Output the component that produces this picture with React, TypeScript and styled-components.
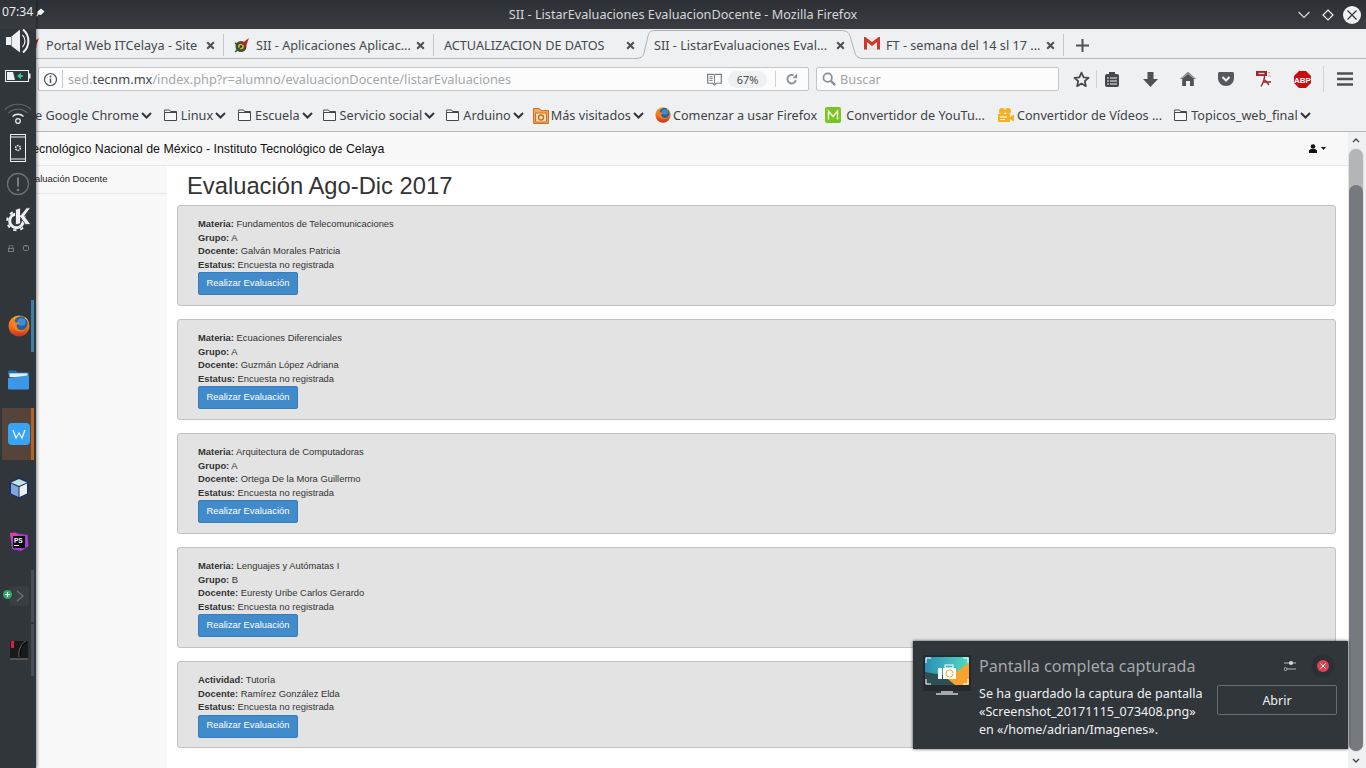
import React from "react";
import styled, { createGlobalStyle } from "styled-components";

const Global = createGlobalStyle`
  html, body { margin: 0; padding: 0; width: 1366px; height: 768px; overflow: hidden; background: #fff; }
  * { box-sizing: border-box; }
  svg { display: block; flex: none; }
`;

const Screen = styled.div`
  position: relative; width: 1366px; height: 768px; overflow: hidden;
  display: flex; flex-direction: column;
  font-family: "Noto Sans", sans-serif; color: #4d4d4d;
`;

/* ---------- window title ---------- */
const TitleBar = styled.header`
  height: 29px; flex: none; position: relative;
  display: flex; align-items: center; justify-content: flex-end; gap: 8px; padding-right: 5px;
  background: linear-gradient(#2c3035, #3a3e43);
`;
const TitleText = styled.div`
  position: absolute; left: 0; right: 0; top: 5px; text-align: center;
  font-size: 12.67px; line-height: 18px; color: #d4d6d8;
`;

/* ---------- tabs ---------- */
const TabBar = styled.nav`
  height: 30px; flex: none; display: flex; align-items: stretch; padding-left: 14px;
  background: #eff0f1; border-bottom: 1px solid #b6b8ba;
`;
const Tab = styled.div<{ $divider?: boolean; $inset?: number }>`
  position: relative; width: 210px; display: flex; align-items: center;
  padding-left: ${p => p.$inset ?? 10}px; padding-top: 3px; font-size: 12.67px; color: #43484d; white-space: nowrap;
  &::after {
    content: ""; display: ${p => (p.$divider ? "block" : "none")};
    position: absolute; right: 0; top: 5px; height: 22px; width: 1px; background: #c5c7c9;
  }
`;
const TabLabel = styled.span`
  position: relative; width: 178px; overflow: hidden; line-height: 18px;
`;
const TabClose = styled.span`
  position: absolute; left: 192px; top: 12px;
`;
const TabFav = styled.span`
  position: absolute; left: 10px; top: 8px;
`;
const ActiveShape = styled.svg`
  position: absolute; left: -9px; top: 0;
`;
const NewTab = styled.div`
  width: 36px; display: flex; align-items: center; justify-content: center; padding-top: 3px;
`;

/* ---------- url toolbar ---------- */
const NavBar = styled.div`
  height: 38px; flex: none; display: flex; align-items: center; padding: 2px 0 0 38px;
  background: #eff0f1; position: relative;
`;
const UrlField = styled.div`
  width: 771px; height: 24px; display: flex; align-items: center; padding-left: 4px;
  background: #fcfcfc; border: 1px solid #c4c5c6; border-radius: 2px; position: relative; font-size: 12.75px;
`;
const InfoBox = styled.div`
  width: 20px; height: 18px; border-right: 1px solid #c8c9ca; margin-right: 5px; display: flex; align-items: center;
`;
const UrlText = styled.span`
  color: #a6a8aa; white-space: nowrap; flex: 1; line-height: 18px;
  b { color: #44484c; font-weight: 400; }
`;
const ReaderIcon = styled.span`margin-right: 6px;`;
const ZoomPill = styled.span`
  width: 39px; height: 17px; border-radius: 9px; background: #eff0f1; color: #4d4d4d;
  font-size: 11px; line-height: 17px; text-align: center; margin-right: 8px;
`;
const UrlDivider = styled.span`
  width: 1px; height: 16px; background: #d0d1d2; margin-right: 10px;
`;
const ReloadIcon = styled.span`margin-right: 10px;`;
const SearchField = styled.div`
  margin-left: 7px; width: 243px; height: 24px; display: flex; align-items: center; gap: 4px; padding-left: 5px;
  background: #fcfcfc; border: 1px solid #c4c5c6; border-radius: 2px; font-size: 12.75px; color: #a2a4a6;
`;
const ToolGroup = styled.div`
  display: flex; align-items: center; margin-left: 14px;
`;
const ToolSlot = styled.div<{ $w: number }>`
  width: ${p => p.$w}px; height: 26px; display: flex; align-items: center; justify-content: center;
`;
const ToolDivider = styled.div<{ $h?: number }>`
  width: 1px; height: ${p => p.$h ?? 18}px; background: #d0d1d2;
`;

/* ---------- bookmarks ---------- */
const BookmarkBar = styled.div`
  height: 35px; flex: none; display: flex; align-items: center; padding: 2px 0 0 35px;
  background: #eff0f1; border-bottom: 1px solid #b6b8ba; font-size: 12.67px; color: #3f4347; white-space: nowrap;
`;
const Bookmark = styled.div<{ $left: number }>`
  display: flex; align-items: center; margin-left: ${p => p.$left}px; line-height: 18px;
`;
const BookmarkIcon = styled.span<{ $gap: number }>`margin-right: ${p => p.$gap}px;`;
const BookmarkChevron = styled.span`margin-left: 2px;`;

/* ---------- page ---------- */
const Viewport = styled.div`
  flex: 1; min-height: 0; display: flex;
`;
const PageArea = styled.div`
  flex: 1; min-width: 0; display: flex; flex-direction: column; font-family: "Liberation Sans", Arial, sans-serif; color: #333;
`;
const SiteHeader = styled.div`
  height: 34px; flex: none; display: flex; align-items: center; justify-content: space-between;
  padding: 0 22px 0 26px; background: #f8f8f8; border-bottom: 1px solid #e7e7e7; color: #111; font-size: 12.37px;
`;
const UserMenu = styled.div`
  display: flex; align-items: center; gap: 3px;
`;
const PageBody = styled.div`
  flex: 1; display: flex; min-height: 0;
`;
const SideMenu = styled.aside`
  width: 167px; flex: none; background: #f8f8f8;
`;
const SideItem = styled.div`
  height: 28px; padding: 7px 0 0 24px; font-size: 9.38px; line-height: 13px; color: #222; border-bottom: 1px solid #e7e7e7;
`;
const Main = styled.main`
  flex: 1; min-width: 0; background: #fff; padding: 0 12px 0 10px; display: flex; flex-direction: column;
`;
const Heading = styled.h1`
  margin: 0; height: 39px; padding: 6px 0 0 10px; font-weight: 400; font-size: 23.75px; line-height: 27px; color: #333;
`;
const Cards = styled.div`
  display: flex; flex-direction: column; gap: 13px;
`;
const Card = styled.section`
  background: #e3e3e3; border: 1px solid #c2c2c2; border-radius: 3px; padding: 12px 20px 10px;
  &:last-child { padding-bottom: 9.5px; }
`;
const Row = styled.div`
  font-size: 9.38px; line-height: 13.5px; color: #333; white-space: nowrap;
  b { font-weight: 700; }
`;
const ActionButton = styled.button`
  display: block; width: 100px; height: 23px; margin: 0; padding: 0 0 2px; background: #428bca; color: #fff;
  border: 1px solid #357ebd; border-radius: 2px; font-family: "Liberation Sans", Arial, sans-serif; font-size: 9.38px;
`;
const Scrollbar = styled.div`
  width: 18px; flex: none; background: #eff0f1; display: flex; flex-direction: column; align-items: flex-start;
`;
const ScrollArrow = styled.div`
  height: 16px; width: 15px; flex: none; display: flex; align-items: center; justify-content: center;
`;
const ScrollTrack = styled.div`
  width: 16px; flex: 1; border-radius: 8px; background: #b4b5b6; border: 1px solid #e2e3e4; display: flex; flex-direction: column; justify-content: flex-end;
`;
const ScrollThumb = styled.div`
  height: 566px; border-radius: 7px; background: #767a7e;
`;

/* ---------- kde dock ---------- */
const Dock = styled.aside`
  position: absolute; left: 0; top: 0; bottom: 0; width: 36px; background: #31363b;
  box-shadow: 1px 0 3px rgba(0,0,0,.45); display: flex; flex-direction: column; align-items: center;
  background-image: linear-gradient(#2e3237 0, #373b40 29px, #31363b 29px);
`;
const Clock = styled.div`
  height: 23px; width: 100%; padding: 3px 0 0 2px; font-size: 12.2px; line-height: 17px; color: #e9eaeb; white-space: nowrap;
  display: flex; align-items: flex-start; gap: 3px;
`;
const PinSlot = styled.span`margin-top: 5px;`;
const TrayItem = styled.div<{ $h: number }>`
  height: ${p => p.$h}px; width: 100%; display: flex; align-items: center; justify-content: center; flex: none;
`;
const LockRow = styled.div`
  display: flex; justify-content: center; gap: 9px; height: 16px; align-items: center; margin: 6px 0 44px; flex: none;
`;
const TaskList = styled.div`
  display: flex; flex-direction: column; gap: 2px; width: 100%; padding-left: 2px;
`;
const TaskItem = styled.div<{ $state?: "active" | "attention" | "open" }>`
  height: 52px; width: 32px; display: flex; align-items: center; justify-content: center; position: relative; padding-left: 1px;
  background: ${p => (p.$state === "attention" ? "#55443a" : "transparent")};
  &::after {
    content: ""; position: absolute; right: 0; top: 0; bottom: 0; width: 3px;
    background: ${p => (p.$state === "active" ? "#3d7eaa" : p.$state === "attention" ? "#b4641f" : p.$state === "open" ? "#4a4e53" : "transparent")};
  }
`;
const TaskBadge = styled.span`
  position: absolute; left: 1px; top: 20px;
`;

/* ---------- notification ---------- */
const Notice = styled.div`
  position: absolute; left: 913px; top: 641px; width: 435px; height: 108px; background: #31363b;
  box-shadow: 0 0 3px rgba(0,0,0,.7); padding: 14px 11px 0 10px; display: grid;
  grid-template-columns: 48px 1fr; column-gap: 8px;
`;
const NoticeBody = styled.div`
  display: flex; flex-direction: column; min-width: 0;
`;
const NoticeHead = styled.div`
  display: flex; align-items: center; height: 22px;
`;
const NoticeTitle = styled.div`
  flex: 1; font-size: 16.1px; line-height: 22px; margin-top: -1px; color: #a4a8ab; white-space: nowrap;
`;
const NoticeClose = styled.span`
  margin-left: 14px; width: 26px; height: 24px; display: flex; align-items: center; justify-content: center; margin-right: 1px;
`;
const NoticeMain = styled.div`
  display: flex; justify-content: space-between; align-items: flex-start; margin-top: 6px;
`;
const NoticeText = styled.div`
  font-size: 12.55px; line-height: 18px; color: #eff0f1; white-space: nowrap; margin-top: 2px;
`;
const OpenButton = styled.button`
  width: 120px; height: 30px; padding: 0; background: transparent; border: 1px solid #6a6e72; border-radius: 2px;
  color: #eff0f1; font-family: "Noto Sans", sans-serif; font-size: 12.5px; margin-top: 2px;
`;

/* ---------- icons ---------- */
const CloseX = () => (
  <svg width="9" height="9" viewBox="0 0 9 9"><path d="M1.2 1.2l6.6 6.6M7.8 1.2L1.2 7.8" stroke="#4d5257" strokeWidth="2.1" /></svg>
);
const Chevron = () => (
  <svg width="11" height="7" viewBox="0 0 11 7"><path d="M1 1l4.5 4.5L10 1" stroke="#32363a" strokeWidth="2" fill="none" /></svg>
);
const Folder = () => (
  <svg width="13" height="12" viewBox="0 0 13 12"><path d="M.5 2.500V1h5l1 1.500h6v9H.5zM.5 3.500h12" stroke="#44484c" fill="#f7f7f7" strokeWidth="1" /></svg>
);
const FirefoxIcon = ({ size = 16 }: { size?: number }) => (
  <svg width={size} height={size} viewBox="0 0 22 22">
    <defs>
      <linearGradient id="foxBody" x1="0" y1="0" x2="0" y2="1"><stop offset="0" stopColor="#f6a11f" /><stop offset=".6" stopColor="#ee6a1c" /><stop offset="1" stopColor="#c9301e" /></linearGradient>
    </defs>
    <circle cx="11" cy="11" r="10.500" fill="url(#foxBody)" />
    <ellipse cx="12.800" cy="8.300" rx="6.800" ry="6.800" fill="#1d63a8" />
    <ellipse cx="13.500" cy="7" rx="4.200" ry="3.800" fill="#3b8fd0" />
    <path d="M4.500 3C3.500 6 3.500 11 7 14.500c3 2.500 8 2.500 11 .5-1 .2-3 .6-5 .2-3-.5-4.500-2.500-4.200-4.800.1-1 1.500-1.800 3-1.800-.7-1.200-2.600-1.400-3.800-.8C7.500 6.500 6 5.200 4.500 3z" fill="#f57f20" />
    <path d="M16.500 1.800c2.500 1.500 4.300 4 4.700 7-.8-2.500-2.400-4.200-4.200-5z" fill="#fbb92d" />
  </svg>
);
const GmailIcon = () => (
  <svg width="16" height="13" viewBox="0 0 16 13">
    <path d="M0 0h16v13H0z" fill="#e8e8e8" />
    <path d="M1.500 12.500V2L8 7l6.500-5v10.500" fill="none" stroke="#c9372c" strokeWidth="3" />
  </svg>
);
const SiiFavicon = () => (
  <svg width="16" height="16" viewBox="0 0 16 16">
    <circle cx="7" cy="9.500" r="5.500" fill="#4e4a35" />
    <circle cx="7" cy="9.500" r="2.800" fill="#d8c22c" />
    <circle cx="7" cy="9.500" r="1.200" fill="#222" />
    <path d="M7 7l8-6-3 8z" fill="#b7261f" />
    <path d="M1 15l6-5M1 6l3 2" stroke="#1d5f2a" strokeWidth="1.600" />
  </svg>
);
const InfoIcon = () => (
  <svg width="15" height="15" viewBox="0 0 15 15"><circle cx="7.500" cy="7.500" r="6" fill="none" stroke="#4d5257" strokeWidth="1.200" /><path d="M7.500 6.500v4.500" stroke="#4d5257" strokeWidth="1.500" /><circle cx="7.500" cy="4.500" r="1" fill="#4d5257" /></svg>
);
const ReaderGlyph = () => (
  <svg width="15" height="13" viewBox="0 0 16 13"><path d="M.7 1h5.800c.7 0 1.500.4 1.500 1 0-.6.800-1 1.500-1h5.800v9.500H10l-2 1.800-2-1.800H.7z" fill="none" stroke="#7b7f83" strokeWidth="1.300" /><path d="M8 2v9M2.500 3.500h3.500M2.500 5.500h3.500M2.500 7.500h3.500" stroke="#7b7f83" /></svg>
);
const ReloadGlyph = () => (
  <svg width="12" height="12" viewBox="0 0 14 14"><path d="M11.500 8.500A5 5 0 1 1 9 2.800" fill="none" stroke="#8d9195" strokeWidth="2.200" /><path d="M7.500 6H13V.5z" fill="#8d9195" /></svg>
);
const SearchGlyph = () => (
  <svg width="14" height="14" viewBox="0 0 16 16"><circle cx="6.500" cy="6.500" r="4.800" fill="none" stroke="#8a8e92" strokeWidth="2" /><path d="M10 10l5 5" stroke="#8a8e92" strokeWidth="2.800" /></svg>
);
const StarGlyph = () => (
  <svg width="17" height="17" viewBox="0 0 17 17"><path d="M8.500 1.600l2.100 4.700 5 .5-3.800 3.400 1.100 5L8.500 12.600l-4.400 2.600 1.100-5L1.400 6.800l5-.5z" fill="none" stroke="#44484c" strokeWidth="1.700" strokeLinejoin="round" /></svg>
);
const ListGlyph = () => (
  <svg width="14" height="15" viewBox="0 0 14 15"><rect x="0" y="2" width="14" height="13" rx="2" fill="#44484c" /><rect x="4" y="0" width="6" height="4" fill="#44484c" /><path d="M2 6h2M5 6h7M2 9h2M5 9h7M2 12h2M5 12h7" stroke="#eff0f1" strokeWidth="1.200" /></svg>
);
const DownGlyph = () => (
  <svg width="15" height="15" viewBox="0 0 15 15"><path d="M4.500 0h6v7h4.500l-7.500 8L0 7h4.500z" fill="#4d5257" /></svg>
);
const HomeGlyph = () => (
  <svg width="16" height="14" viewBox="0 0 16 14"><path d="M8 0l8 7h-2.200v7H10V9H6v5H2.200V7H0z" fill="#4d5257" /><path d="M1.500 6.700L8 1.500l6.500 5.200" stroke="#eff0f1" strokeWidth=".7" fill="none" /></svg>
);
const PocketGlyph = () => (
  <svg width="16" height="14" viewBox="0 0 16 14"><path d="M1.500 0h13c.8 0 1.500.6 1.500 1.500V6c0 4.500-3.600 8-8 8s-8-3.500-8-8V1.500C0 .6.700 0 1.500 0z" fill="#55595d" /><path d="M4.500 5L8 8.500 11.500 5" stroke="#eff0f1" strokeWidth="2" fill="none" /></svg>
);
const PdfGlyph = () => (
  <svg width="16" height="17" viewBox="0 0 16 17">
    <rect x="5" y="4" width="10" height="13" fill="#fafafa" />
    <rect x="0" y="0" width="11" height="5" fill="#a5242a" />
    <rect x="2.500" y="1.800" width="6" height="1.400" fill="#e8c8c8" />
    <path d="M12 1.500h2M12 5h3" stroke="#aaa" />
    <path d="M8.500 5c0 3.500-1 6.500-3.500 10.500M6.500 11h8.500M9 9l4 5" fill="none" stroke="#a5242a" strokeWidth="1.400" />
  </svg>
);
const AbpGlyph = () => (
  <svg width="17" height="17" viewBox="0 0 17 17">
    <path d="M5 0h7l5 5v7l-5 5H5l-5-5V5z" fill="#c70d0d" />
    <text x="8.500" y="11.500" textAnchor="middle" fontFamily="Liberation Sans" fontWeight="700" fontSize="8" fill="#fff">ABP</text>
  </svg>
);
const Hamburger = () => (
  <svg width="16" height="14" viewBox="0 0 16 14"><path d="M0 1.500h16M0 7h16M0 12.500h16" stroke="#4d5257" strokeWidth="2.400" /></svg>
);
const Plus = () => (
  <svg width="13" height="13" viewBox="0 0 13 13"><path d="M6.500 0v13M0 6.500h13" stroke="#4d5257" strokeWidth="2" /></svg>
);
const MasIcon = () => (
  <svg width="16" height="17" viewBox="0 0 16 17"><path d="M.5 1.500h6l1.500 2h7.500v13H.5z" fill="#f0a868" stroke="#d4721a" /><rect x="2.500" y="6" width="11" height="9" fill="#f8dcc0" stroke="#d4721a" /><circle cx="8" cy="10.500" r="2.500" fill="none" stroke="#c96d12" strokeWidth="1.300" /></svg>
);
const MIcon = () => (
  <svg width="16" height="16" viewBox="0 0 16 16"><rect width="16" height="16" rx="2" fill="#79c322" /><path d="M3.500 12.500V4L8 9.500 12.500 4v8.500" fill="none" stroke="#e8f8d0" strokeWidth="1.500" /></svg>
);
const VideoIcon = () => (
  <svg width="16" height="15" viewBox="0 0 16 15"><circle cx="4" cy="3" r="3" fill="#f5b11d" /><circle cx="10" cy="3" r="3" fill="#f5b11d" /><rect x="0" y="6" width="12" height="8" rx="1" fill="#f5b11d" /><path d="M12 9l4-2.500v7L12 11z" fill="#f5b11d" /><path d="M2 9h7M2 11.500h5" stroke="#fff" /></svg>
);
const UserGlyph = () => (
  <svg width="9" height="9" viewBox="0 0 9 9"><circle cx="4" cy="2.500" r="2.300" fill="#111" /><path d="M0 9V7c0-1.500 1.500-2 4-2s4 .5 4 2v2z" fill="#111" /></svg>
);
const Caret = () => (
  <svg width="5" height="3" viewBox="0 0 5 3"><path d="M0 0h5L2.500 3z" fill="#111" /></svg>
);

const Notify = () => (
  <svg width="48" height="40" viewBox="0 0 48 40">
    <defs>
      <linearGradient id="screenL" x1="0" y1="0" x2="1" y2="0"><stop offset="0" stopColor="#2a8fb5" /><stop offset="1" stopColor="#50dbc0" /></linearGradient>
    </defs>
    <rect width="48" height="36" fill="#26292d" />
    <rect x="2" y="2" width="44" height="28" fill="url(#screenL)" />
    <path d="M46 2v28H30L14 30 46 8z" fill="#f6a32f" />
    <path d="M2 30V17l18 3 12 10z" fill="#2f4f55" />
    <path d="M3 8V3h5M40 3h5v5M3 24v5h5M40 29h5v-5" fill="none" stroke="#fff" strokeWidth="1" />
    <rect x="15" y="13" width="4" height="11" fill="#fff" />
    <rect x="20" y="13" width="13" height="11" fill="#fff" />
    <rect x="22" y="10" width="8" height="3" fill="none" stroke="#fff" />
    <circle cx="26.500" cy="18.500" r="3.600" fill="none" stroke="#f6a32f" />
    <rect x="18" y="36" width="12" height="2" fill="#a6a8aa" />
    <rect x="13" y="38" width="22" height="2" fill="#a6a8aa" />
  </svg>
);
const Sliders = () => (
  <svg width="12" height="12" viewBox="0 0 12 12"><path d="M0 3h12M3 9h9" stroke="#b4b6b8" /><circle cx="7" cy="3" r="2" fill="#d8d9da" /><circle cx="1.500" cy="9" r="1.500" fill="#31363b" stroke="#b4b6b8" /></svg>
);
const RedClose = () => (
  <svg width="24" height="24" viewBox="0 0 24 24"><circle cx="12" cy="12" r="11.500" fill="#2c3034" /><circle cx="12" cy="12" r="6" fill="#da4453" /><path d="M9.500 9.500l5 5M14.500 9.500l-5 5" stroke="#fff" /></svg>
);

const Pin = () => (
  <svg width="9" height="9" viewBox="0 0 9 9"><path d="M5 .5l3.500 3-3.500 3.500-2.500-.5-1.500 2-.5-.5 1-2.200L1.500 3.500z" fill="#eff0f1" /></svg>
);
const Speaker = () => (
  <svg width="24" height="24" viewBox="0 0 24 24"><path d="M0 8h5v8H0z" fill="#eff0f1" /><path d="M5.500 7.500L14 .5v23l-8.500-6.500z" fill="#eff0f1" /><path d="M16.500 6a8.500 8.500 0 0 1 0 12" fill="none" stroke="#eff0f1" strokeWidth="1.200" /><path d="M17 .5a15 15 0 0 1 0 23" fill="none" stroke="#eff0f1" strokeWidth="2" /></svg>
);
const Battery = () => (
  <svg width="26" height="12" viewBox="0 0 26 12"><rect x=".5" y=".5" width="23" height="11" fill="#31363b" stroke="#eff0f1" /><path d="M2 2h6l2 8H2z" fill="#eff0f1" /><path d="M24 3.500h1.500v5H24z" fill="#eff0f1" /><path d="M18 6h-3" stroke="#2ed0a0" strokeWidth="1.600" /><path d="M16 2.800L12 6l4 3.200z" fill="#2ed0a0" /></svg>
);
const Wifi = () => (
  <svg width="28" height="24" viewBox="0 0 28 24"><path d="M1 8.500c7-7 19-7 26 0" fill="none" stroke="#5f6468" strokeWidth="1.100" /><path d="M4.500 12c5-5 14-5 19 0" fill="none" stroke="#6a6e72" strokeWidth="1.100" /><path d="M8.500 15.500c3-3 8-3 11 0" fill="none" stroke="#eff0f1" strokeWidth="1.300" /><circle cx="14" cy="20" r="2.300" fill="none" stroke="#eff0f1" strokeWidth="1.200" /></svg>
);
const Phone = () => (
  <svg width="16" height="28" viewBox="0 0 16 28"><rect x=".5" y=".5" width="15" height="27" fill="#31363b" stroke="#eff0f1" /><rect x="0" y="2.500" width="16" height="1" fill="#eff0f1" /><rect x="0" y="24.500" width="16" height="1" fill="#eff0f1" /><circle cx="8" cy="14" r="2.400" fill="none" stroke="#eff0f1" strokeWidth="1.500" strokeDasharray="1.500 .8" /></svg>
);
const Warn = () => (
  <svg width="24" height="24" viewBox="0 0 24 24"><circle cx="12" cy="12" r="10.500" fill="none" stroke="#6b7074" strokeWidth="1.300" /><path d="M12 5.500v9" stroke="#7a7e82" strokeWidth="2" /><circle cx="12" cy="18" r="1.300" fill="#7a7e82" /></svg>
);
const KdeLogo = () => (
  <svg width="25" height="25" viewBox="0 0 25 25">
    <circle cx="10.500" cy="14" r="6.800" fill="none" stroke="#eff0f1" strokeWidth="3" strokeDasharray="31 11.700" />
    <circle cx="10.500" cy="14" r="9.300" fill="none" stroke="#eff0f1" strokeWidth="2" strokeDasharray="3.300 4" />
    <path d="M9.500 2.500L14.500.8v7.400L20.500.8h4L18.500 9l6.300 8.500h-5.300L14.500 10.500v6.200l-5 1z" fill="#eff0f1" stroke="#31363b" strokeWidth=".8" />
  </svg>
);
const LockGlyph = () => (
  <svg width="6" height="7" viewBox="0 0 6 7"><path d="M1.200 3V1.800a1.800 1.800 0 0 1 3.600 0V3" fill="none" stroke="#777b7f" /><rect x=".5" y="3.500" width="5" height="3" fill="none" stroke="#777b7f" /></svg>
);
const PowerGlyph = () => (
  <svg width="6" height="6" viewBox="0 0 6 6"><rect x=".5" y=".5" width="5" height="5" rx="1.500" fill="none" stroke="#777b7f" /><path d="M3 0v2" stroke="#777b7f" /></svg>
);
const DockFolder = () => (
  <svg width="21" height="20" viewBox="0 0 22 20"><path d="M0 1.500C0 .7.500 0 1.300 0H8l2 2h10.500c.8 0 1.500.6 1.500 1.400V5H0z" fill="#1c6fb5" /><rect x="1.500" y="3" width="19" height="4" fill="#e6eef4" /><path d="M0 8l22-3v14c0 .5-.4 1-1 1H1c-.6 0-1-.5-1-1z" fill="#3c98e6" /></svg>
);
const Wps = () => (
  <svg width="22" height="22" viewBox="0 0 22 22"><rect width="22" height="22" rx="4" fill="#3aa4f4" /><path d="M5 7l3 8 3-5 3 5 3-8" fill="none" stroke="#e8f5ff" strokeWidth="1.300" /></svg>
);
const Cube = () => (
  <svg width="20" height="22" viewBox="0 0 20 22"><path d="M10 .5l9.500 4.500v12L10 21.500.5 17V5z" fill="#1d2c5a" stroke="#2a2f5f" /><path d="M10 2l8 3.500L10 9 2 5.500z" fill="#bfe3e0" /><path d="M2 6.500L9.500 10v10L2 16.500z" fill="#7ea7dc" /><path d="M18 6.500L10.500 10v10l7.500-3.500z" fill="#e8eef2" /></svg>
);
const PhpStorm = () => (
  <svg width="20" height="20" viewBox="0 0 20 20">
    <path d="M1 1l8 .5 9.500 1.500L19.500 14 12 19 3 17z" fill="#a43fd6" />
    <path d="M1 1l6-.5 3 5L2.500 9z" fill="#e23dab" />
    <rect x="4" y="4" width="12" height="12" fill="#0c0c0c" />
    <text x="5" y="10.500" fontFamily="Liberation Sans" fontWeight="700" fontSize="6.500" fill="#fff">PS</text>
    <rect x="5" y="13" width="5" height="1" fill="#fff" />
  </svg>
);
const Terminal = () => (
  <svg width="20" height="20" viewBox="0 0 20 20"><rect width="20" height="20" rx="2" fill="#3a3e40" /><path d="M8 5l6 5-6 5" fill="none" stroke="#6d7073" strokeWidth="1.400" /></svg>
);
const Plus2 = () => (
  <svg width="9" height="9" viewBox="0 0 9 9"><circle cx="4.500" cy="4.500" r="4.500" fill="#27ae60" /><path d="M4.500 2v5M2 4.500h5" stroke="#fff" strokeWidth="1.200" /></svg>
);
const LastApp = () => (
  <svg width="18" height="19" viewBox="0 0 18 19"><rect width="18" height="19" rx="1" fill="#1a1a1a" /><rect y="17" width="18" height="2" fill="#555" /><rect x="1" y="0" width="3" height="7" fill="#d02434" /><path d="M17 1c-5 1-8 7-7 15" fill="none" stroke="#0a0a0a" strokeWidth="2" /><path d="M16 0c-4 2-8 8-7 16" fill="none" stroke="#9a9a9a" strokeWidth=".6" /></svg>
);
const WinDown = () => (
  <svg width="14" height="8" viewBox="0 0 14 8"><path d="M1.500 1l5.500 5.500L12.500 1" fill="none" stroke="#d8d9da" strokeWidth="1.200" /></svg>
);
const WinDiamond = () => (
  <svg width="12" height="12" viewBox="0 0 12 12"><path d="M6 1l5 5-5 5-5-5z" fill="none" stroke="#eff0f1" strokeWidth="1.200" /></svg>
);
const WinClose = () => (
  <svg width="18" height="18" viewBox="0 0 18 18"><circle cx="9" cy="9" r="9" fill="#eff0f1" /><path d="M4.500 4.500l9 9M13.500 4.500l-9 9" stroke="#31363b" strokeWidth="1.200" /></svg>
);
const ArrowUp = () => (
  <svg width="8" height="5" viewBox="0 0 8 5"><path d="M1 4l3-3 3 3" fill="none" stroke="#44484c" strokeWidth="1.400" /></svg>
);
const ArrowDown = () => (
  <svg width="8" height="5" viewBox="0 0 8 5"><path d="M1 1l3 3 3-3" fill="none" stroke="#44484c" strokeWidth="1.400" /></svg>
);

const tabs: { label: string; icon?: React.ReactNode; active?: boolean; divider?: boolean }[] = [
  { label: "Portal Web ITCelaya - Site", icon: <SiiFavicon />, divider: true },
  { label: "SII - Aplicaciones Aplicac...", icon: <SiiFavicon />, divider: true },
  { label: "ACTUALIZACION DE DATOS" },
  { label: "SII - ListarEvaluaciones Eval...", active: true },
  { label: "FT - semana del 14 sl 17 ...", icon: <GmailIcon />, divider: true },
];

const bookmarks: { label: string; icon?: React.ReactNode; gap?: number; chevron?: boolean; left: number }[] = [
  { label: "e Google Chrome", chevron: true, left: 0 },
  { label: "Linux", icon: <Folder />, gap: 4, chevron: true, left: 12 },
  { label: "Escuela", icon: <Folder />, gap: 4, chevron: true, left: 12 },
  { label: "Servicio social", icon: <Folder />, gap: 4, chevron: true, left: 10 },
  { label: "Arduino", icon: <Folder />, gap: 4, chevron: true, left: 11 },
  { label: "Más visitados", icon: <MasIcon />, gap: 2, chevron: true, left: 9 },
  { label: "Comenzar a usar Firefox", icon: <FirefoxIcon />, gap: 2, left: 11 },
  { label: "Convertidor de YouTu...", icon: <MIcon />, gap: 5, left: 8 },
  { label: "Convertidor de Vídeos ...", icon: <VideoIcon />, gap: 3, left: 13 },
  { label: "Topicos_web_final", icon: <Folder />, gap: 4, chevron: true, left: 12 },
];

const evaluations: { label: string; value: string }[][] = [
  [
    { label: "Materia:", value: "Fundamentos de Telecomunicaciones" },
    { label: "Grupo:", value: "A" },
    { label: "Docente:", value: "Galván Morales Patricia" },
    { label: "Estatus:", value: "Encuesta no registrada" },
  ],
  [
    { label: "Materia:", value: "Ecuaciones Diferenciales" },
    { label: "Grupo:", value: "A" },
    { label: "Docente:", value: "Guzmán López Adriana" },
    { label: "Estatus:", value: "Encuesta no registrada" },
  ],
  [
    { label: "Materia:", value: "Arquitectura de Computadoras" },
    { label: "Grupo:", value: "A" },
    { label: "Docente:", value: "Ortega De la Mora Guillermo" },
    { label: "Estatus:", value: "Encuesta no registrada" },
  ],
  [
    { label: "Materia:", value: "Lenguajes y Autómatas I" },
    { label: "Grupo:", value: "B" },
    { label: "Docente:", value: "Euresty Uribe Carlos Gerardo" },
    { label: "Estatus:", value: "Encuesta no registrada" },
  ],
  [
    { label: "Actividad:", value: "Tutoría" },
    { label: "Docente:", value: "Ramírez González Elda" },
    { label: "Estatus:", value: "Encuesta no registrada" },
  ],
];

export default function App() {
  return (
    <Screen>
      <Global />
      <TitleBar>
        <TitleText>SII - ListarEvaluaciones EvaluacionDocente - Mozilla Firefox</TitleText>
        <ToolSlot $w={18}><WinDown /></ToolSlot>
        <ToolSlot $w={14}><WinDiamond /></ToolSlot>
        <ToolSlot $w={18}><WinClose /></ToolSlot>
      </TitleBar>
      <TabBar>
        {tabs.map(t => (
          <Tab key={t.label} $divider={t.divider} $inset={t.icon ? 32 : 10}>
            {t.active && (
              <ActiveShape width="230" height="30" viewBox="0 0 230 30">
                <path d="M0 30V29.500C5 29.500 8 28 9 24L13 7C14 3 16 1.500 20 1.500H205C211 1.500 214 3 215 7L220 24C221 28 224 29.500 229 29.500V30z" fill="#eff0f1" />
                <path d="M0 29.500C5 29.500 8 28 9 24L13 7C14 3 16 1.500 20 1.500H205C211 1.500 214 3 215 7L220 24C221 28 224 29.500 229 29.500" fill="none" stroke="#aeb0b2" />
              </ActiveShape>
            )}
            {t.icon && <TabFav>{t.icon}</TabFav>}
            <TabLabel>{t.label}</TabLabel>
            <TabClose><CloseX /></TabClose>
          </Tab>
        ))}
        <NewTab><Plus /></NewTab>
      </TabBar>
      <NavBar>
        <UrlField>
          <InfoBox><InfoIcon /></InfoBox>
          <UrlText>sed.<b>tecnm.mx</b>/index.php?r=alumno/evaluacionDocente/listarEvaluaciones</UrlText>
          <ReaderIcon><ReaderGlyph /></ReaderIcon>
          <ZoomPill>67%</ZoomPill>
          <UrlDivider />
          <ReloadIcon><ReloadGlyph /></ReloadIcon>
        </UrlField>
        <SearchField><SearchGlyph />Buscar</SearchField>
        <ToolGroup>
          <ToolSlot $w={17}><StarGlyph /></ToolSlot>
          <ToolSlot $w={12}><ToolDivider /></ToolSlot>
          <ToolSlot $w={20}><ListGlyph /></ToolSlot>
          <ToolSlot $w={18} />
          <ToolSlot $w={20}><DownGlyph /></ToolSlot>
          <ToolSlot $w={18} />
          <ToolSlot $w={20}><HomeGlyph /></ToolSlot>
          <ToolSlot $w={18} />
          <ToolSlot $w={20}><PocketGlyph /></ToolSlot>
          <ToolSlot $w={18} />
          <ToolSlot $w={20}><PdfGlyph /></ToolSlot>
          <ToolSlot $w={18} />
          <ToolSlot $w={20}><AbpGlyph /></ToolSlot>
          <ToolSlot $w={11} />
          <ToolDivider $h={26} />
          <ToolSlot $w={12} />
          <ToolSlot $w={18}><Hamburger /></ToolSlot>
        </ToolGroup>
      </NavBar>
      <BookmarkBar>
        {bookmarks.map(b => (
          <Bookmark key={b.label} $left={b.left}>
            {b.icon && <BookmarkIcon $gap={b.gap ?? 2}>{b.icon}</BookmarkIcon>}
            <span>{b.label}</span>
            {b.chevron && <BookmarkChevron><Chevron /></BookmarkChevron>}
          </Bookmark>
        ))}
      </BookmarkBar>
      <Viewport>
        <PageArea>
          <SiteHeader>
            <span>Tecnológico Nacional de México - Instituto Tecnológico de Celaya</span>
            <UserMenu><UserGlyph /><Caret /></UserMenu>
          </SiteHeader>
          <PageBody>
            <SideMenu>
              <SideItem>Evaluación Docente</SideItem>
            </SideMenu>
            <Main>
              <Heading>Evaluación Ago-Dic 2017</Heading>
              <Cards>
                {evaluations.map((rows, i) => (
                  <Card key={i}>
                    {rows.map(r => (
                      <Row key={r.label}><b>{r.label}</b> {r.value}</Row>
                    ))}
                    <ActionButton>Realizar Evaluación</ActionButton>
                  </Card>
                ))}
              </Cards>
            </Main>
          </PageBody>
        </PageArea>
        <Scrollbar>
          <ScrollArrow><ArrowUp /></ScrollArrow>
          <ScrollTrack><ScrollThumb /></ScrollTrack>
          <ScrollArrow><ArrowDown /></ScrollArrow>
        </Scrollbar>
      </Viewport>

      <Dock>
        <Clock>07:34<PinSlot><Pin /></PinSlot></Clock>
        <TrayItem $h={35}><Speaker /></TrayItem>
        <TrayItem $h={36}><Battery /></TrayItem>
        <TrayItem $h={38}><Wifi /></TrayItem>
        <TrayItem $h={32}><Phone /></TrayItem>
        <TrayItem $h={40}><Warn /></TrayItem>
        <TrayItem $h={30}><KdeLogo /></TrayItem>
        <LockRow><LockGlyph /><PowerGlyph /></LockRow>
        <TaskList>
          <TaskItem $state="active"><FirefoxIcon size={22} /></TaskItem>
          <TaskItem><DockFolder /></TaskItem>
          <TaskItem $state="attention"><Wps /></TaskItem>
          <TaskItem><Cube /></TaskItem>
          <TaskItem><PhpStorm /></TaskItem>
          <TaskItem $state="open"><Terminal /><TaskBadge><Plus2 /></TaskBadge></TaskItem>
          <TaskItem $state="open"><LastApp /></TaskItem>
        </TaskList>
      </Dock>

      <Notice>
        <Notify />
        <NoticeBody>
          <NoticeHead>
            <NoticeTitle>Pantalla completa capturada</NoticeTitle>
            <Sliders />
            <NoticeClose><RedClose /></NoticeClose>
          </NoticeHead>
          <NoticeMain>
            <NoticeText>
              Se ha guardado la captura de pantalla<br />
              «Screenshot_20171115_073408.png»<br />
              en «/home/adrian/Imagenes».
            </NoticeText>
            <OpenButton>Abrir</OpenButton>
          </NoticeMain>
        </NoticeBody>
      </Notice>
    </Screen>
  );
}
